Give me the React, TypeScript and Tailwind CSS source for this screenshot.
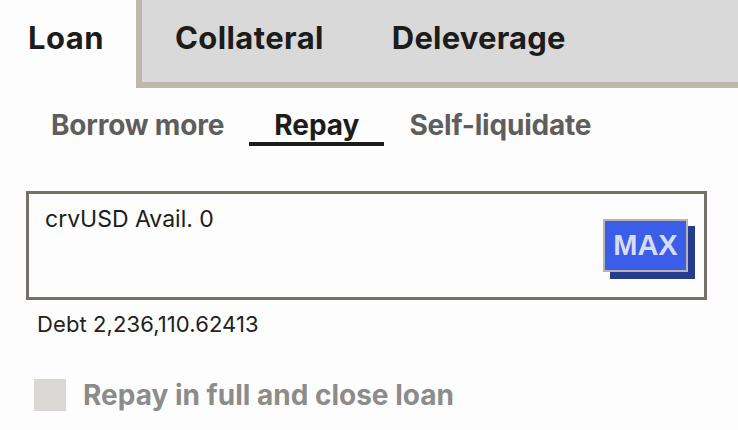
import React from "react";

export default function App() {
  return (
    <div
      className="w-[738px] h-[430px] bg-[#fdfdfd] overflow-hidden text-[#1c1c1a]"
      style={{ fontFamily: "Inter, 'Noto Sans', sans-serif" }}
    >
      {/* main tabs */}
      <div className="flex h-[88px]">
        <div className="w-[136px] h-[82px] flex items-center pl-[28px] pb-[6px]">
          <span className="text-[31px] font-bold tracking-[0.5px]">Loan</span>
        </div>
        <div className="flex-1 flex bg-[#d9d9d9] border-l-[6px] border-b-[6px] border-[#bcb8b0] pb-[6px]">
          <div className="pl-[33px] pr-[35px] flex items-center">
            <span className="text-[31px] font-bold tracking-[0.4px]">Collateral</span>
          </div>
          <div className="pl-[33px] flex items-center">
            <span className="text-[31px] font-bold tracking-[0.2px]">Deleverage</span>
          </div>
        </div>
      </div>

      {/* sub tabs */}
      <div className="flex pl-[26px] mt-[20px] h-[38px]">
        <div className="px-[25px] flex flex-col">
          <span className="text-[28px] font-bold text-[#5e5e5c] leading-[34px] tracking-[-0.2px]">Borrow more</span>
        </div>
        <div className="px-[25px] flex flex-col border-b-[4px] border-[#1c1c1a]">
          <span className="text-[28px] font-bold leading-[34px]">Repay</span>
        </div>
        <div className="px-[25px] flex flex-col">
          <span className="text-[28px] font-bold text-[#5e5e5c] leading-[34px] tracking-[-0.2px]">Self-liquidate</span>
        </div>
      </div>

      {/* input box */}
      <div className="ml-[26px] w-[681px] mt-[45px] h-[109px] border-[3px] border-[#757068] flex justify-between pl-[16px] pr-[16px] bg-[#fdfdfd]">
        <div className="pt-[11px] text-[23px] leading-[28px]">crvUSD Avail. 0</div>
        <div className="self-center">
          <button
            className="w-[85px] h-[53px] bg-[#3a5ee8] border-[2px] border-[#b8b5ae] text-[#d8dcf2] text-[29px] font-bold shadow-[7px_7px_0_#263a8f] flex items-center justify-center"
            style={{ fontFamily: "'Liberation Sans', Arial, sans-serif" }}
          >
            MAX
          </button>
        </div>
      </div>

      <div className="pl-[37px] mt-[11px] text-[22px] leading-[27px] text-[#222220] tracking-[0.1px]">
        Debt 2,236,110.62413
      </div>

      <div className="flex items-center pl-[34px] mt-[40px] h-[34px]">
        <div className="w-[32px] h-[32px] bg-[#d9d8d4]" />
        <span className="ml-[17px] text-[28px] leading-[34px] font-bold text-[#8c8c8a]">
          Repay in full and close loan
        </span>
      </div>
    </div>
  );
}
